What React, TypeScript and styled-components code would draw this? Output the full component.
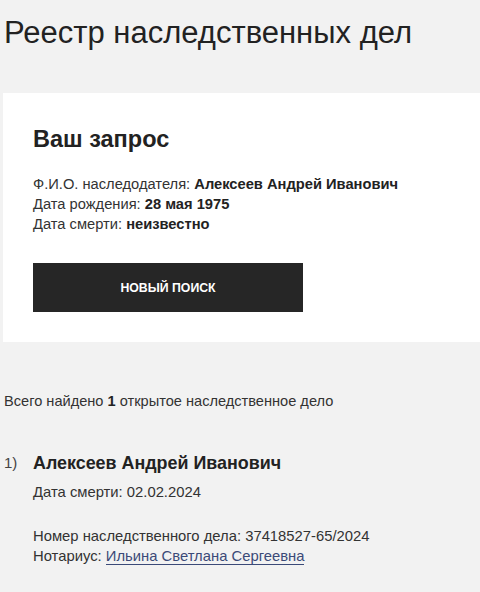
import React from "react";
import styled, { createGlobalStyle } from "styled-components";

const Global = createGlobalStyle`
  html, body { margin: 0; padding: 0; background: #f2f2f2; }
  body { font-family: "Liberation Sans", Arial, sans-serif; color: #222; }
`;

const Page = styled.div`
  width: 480px;
  min-height: 592px;
  background: #f2f2f2;
  padding: 0 0 0 3px;
  box-sizing: border-box;
  overflow: hidden;
`;

const Title = styled.h1`
  margin: 0;
  padding: 16px 0 0 1px;
  font-size: 31px;
  line-height: 34px;
  font-weight: 400;
  color: #222;
  height: 93px;
  box-sizing: border-box;
  white-space: nowrap;
`;

const Card = styled.section`
  background: #fff;
  padding: 32px 30px 30px 30px;
  display: flex;
  flex-direction: column;
  align-items: flex-start;
  height: 249px;
  box-sizing: border-box;
`;

const CardTitle = styled.h2`
  margin: 0 0 21px 0;
  font-size: 23.5px;
  line-height: 28px;
  font-weight: 700;
  color: #222;
`;

const InfoLine = styled.div`
  font-size: 14.7px;
  line-height: 20px;
  color: #333;
`;

const Strong = styled.b`
  font-weight: 700;
  color: #222;
`;

const Button = styled.button`
  margin-top: 29px;
  width: 270px;
  height: 49px;
  background: #262626;
  color: #fff;
  border: none;
  font-family: "Liberation Sans", Arial, sans-serif;
  font-weight: 700;
  font-size: 12.3px;
  letter-spacing: 0;
  text-transform: uppercase;
`;

const Summary = styled.p`
  margin: 49px 0 0 1px;
  font-size: 14.6px;
  line-height: 20px;
  color: #333;
`;

const ResultItem = styled.div`
  margin-top: 40px;
  display: grid;
  grid-template-columns: 29px 1fr;
  padding-left: 1px;
`;

const Index = styled.div`
  font-size: 15px;
  line-height: 24px;
  color: #444;
`;

const ResultBody = styled.div`
  display: flex;
  flex-direction: column;
`;

const Name = styled.div`
  font-size: 17.9px;
  line-height: 24px;
  font-weight: 700;
  color: #222;
`;

const Detail = styled.div<{ $gap?: number }>`
  margin-top: ${(p) => p.$gap ?? 0}px;
  font-size: 14.8px;
  line-height: 20px;
  color: #333;
`;

const Link = styled.a`
  color: #3b4a78;
  text-decoration: none;
  border-bottom: 1px solid #3b4a78;
`;

export default function App() {
  return (
    <Page>
      <Global />
      <Title>Реестр наследственных дел</Title>
      <Card>
        <CardTitle>Ваш запрос</CardTitle>
        <InfoLine>
          Ф.И.О. наследодателя: <Strong>Алексеев Андрей Иванович</Strong>
        </InfoLine>
        <InfoLine>
          Дата рождения: <Strong>28 мая 1975</Strong>
        </InfoLine>
        <InfoLine>
          Дата смерти: <Strong>неизвестно</Strong>
        </InfoLine>
        <Button>Новый поиск</Button>
      </Card>
      <Summary>
        Всего найдено <Strong>1</Strong> открытое наследственное дело
      </Summary>
      <ResultItem>
        <Index>1)</Index>
        <ResultBody>
          <Name>Алексеев Андрей Иванович</Name>
          <Detail $gap={7}>Дата смерти: 02.02.2024</Detail>
          <Detail $gap={24}>Номер наследственного дела: 37418527-65/2024</Detail>
          <Detail>
            Нотариус: <Link href="#">Ильина Светлана Сергеевна</Link>
          </Detail>
        </ResultBody>
      </ResultItem>
    </Page>
  );
}
